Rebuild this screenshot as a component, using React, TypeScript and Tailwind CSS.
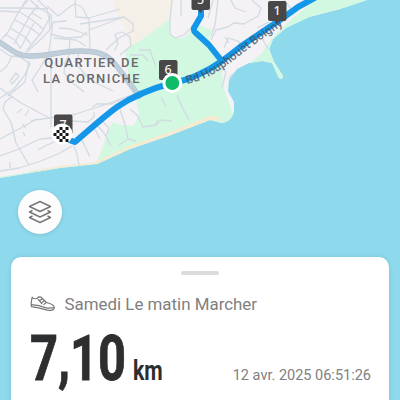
type Marker = { label: string; x: number; y: number };

const MARKERS: Marker[] = [
  { label: "5", x: 200.5, y: 0 },
  { label: "1", x: 277, y: 11 },
  { label: "6", x: 168, y: 70 },
  { label: "7", x: 63, y: 124.5 },
];

const STREETS = [
  "M0 8H20L48 9",
  "M0 11L18 12L28 0",
  "M26 0L17 15L8 32L2 39",
  "M30 0L39 8L51 15L42 32L27 50",
  "M20 12L35 22L43 29",
  "M15 20L32 29L40 35",
  "M10 28L25 37L31 44",
  "M6 35L15 40L20 48",
  "M29 17L14 44",
  "M34 23L20 49",
  "M38 5L28 18M32 13L42 19",
  "M38 0L47 9L49 18L50 30L38 42L23 55",
  "M47 6L58 16L71 6L75 4L82 7L89 20L90 50",
  "M75 0L76 17L89 18L120 9",
  "M51 15L52 30L49 52L40 68L32 80L38 92",
  "M50 29L54 22L67 21",
  "M50 34L66 38L81 37L87 32",
  "M59 28L71 29L88 35",
  "M54 38L76 40L86 46",
  "M70 38L69 52",
  "M80 24L100 21L124 17L133 24V31L119 38L106 50",
  "M89 30L121 18",
  "M114 51L118 44L115 34L122 32L130 37L131 46L120 55",
  "M51 54V127",
  "M0 49L10 56L20 57L30 64L24 76L13 90L0 98",
  "M12 56L7 66L0 72",
  "M10 81L16 73L19 76L12 84Z",
  "M29 61L25 82L8 96",
  "M70 53L65 63L64 73L74 84L84 92",
  "M79 51L77 65L90 80",
  "M0 88L12 97L23 104L51 119",
  "M13 96L5 102L3 109L11 122L16 143L29 165",
  "M0 139L17 130L35 120L50 118L76 114L110 103L142 91",
  "M0 156L19 149L40 139L53 138",
  "M0 171L19 168L41 161L60 153L72 146",
  "M17 113L22 109M25 116L29 110M31 121L37 119M22 124L26 128",
  "M38 150L45 146L52 143L61 139",
  "M72 121L88 122L94 117V112",
  "M92 107L97 104L112 104L124 98",
  "M73 144L77 154L79 165M82 140L90 157",
  "M90 126L96 131L100 139M95 123L104 133L111 146",
  "M100 119L109 128L106 136",
  "M119 106L125 125L128 139L119 145M128 139L136 141",
  "M10 162V168M23 132L25 136",
  "M88 76L96 83L113 91",
  "M130 109L137 115L143 127L156 125L161 120L172 121",
  "M158 120L154 126M161 97L166 106",
  "M177 95L182 107L189 120",
  "M139 50L150 50L156 67M130 55L143 55L148 61",
  "M172 0L170 20L170 34L175 38L184 35L193 26L199 16",
  "M181 0V16",
  "M213 0L208 18M218 0L215 25L211 36",
  "M211 40L216 30L228 27L234 23L244 24L258 16L261 8L252 0",
  "M231 0L235 8L246 12",
  "M224 48L228 38L238 41L243 47M225 37L229 43",
  "M257 28L269 22M262 38L268 49",
  "M221 68L226 72L222 88M229 78L234 73",
  "M284 0L292 10",
];

const CHECKS = [
  [60, 127], [66, 127], [57, 130], [63, 130], [60, 133], [66, 133],
  [54, 133], [57, 136], [63, 136], [60, 139], [66, 139],
];

const COAST =
  "M0 0H367L340 9L309 17L286 28L273 39L269 49L274 62L283 76Q283 80 279 78L272 63L262 61L249 63L237 69L229 80L228 91L234 102V112Q231 122 222 123L210 120L168 136L130 149L97 164L60 168L30 173L0 178Z";

function MapView() {
  return (
    <svg className="absolute inset-0 h-[400px] w-[400px]" viewBox="0 0 400 400" fill="none">
      <defs>
        <clipPath id="land">
          <path d={COAST} />
        </clipPath>
      </defs>
      <g clipPath="url(#land)">
        <rect width="400" height="200" fill="#f4f2f5" />
        {/* Beach quarter and parks */}
        <path d="M114 0H174L169 20L130 48L124 27L114 8Z" fill="#f5f0e7" />
        <path
          d="M170 19L169 34Q177 42 187 36L196 24L212 30L208 41L222 57L222 70L223 86L239 130L97 175V162L112 122L120 125L134 126L139 115L137 104L129 81L125 50L141 40Z"
          fill="#d3f8e1"
        />
        <path d="M222 57L278 24V47L250 62L235 70L223 84Z" fill="#f4f2f5" />
        <path
          d="M246 66L262 53L272 38L286 24L303 10L314 0H370L309 22L287 31L275 40L271 49L286 80L278 80L270 62Z"
          fill="#d3f8e1"
        />
        <path d="M97 163L130 148L170 134L210 118L220 119" stroke="#f4ebd0" strokeWidth="4" />
        <path d="M30 172L60 167L97 163" stroke="#f4ebd0" strokeWidth="2" />
        <path d="M0 178L30 173L83 166" stroke="#c9f4e2" strokeWidth="2" />

        <g stroke="#d2dae2" strokeWidth="1.3" strokeLinejoin="round">
          {STREETS.map((d) => (
            <path key={d} d={d} />
          ))}
        </g>
        <path
          d="M-2 41C10 49 17 56 30 56C48 56 63 51 80 51C95 51 103 53 110 59C121 69 129 84 141 98"
          stroke="#b4c4d2"
          strokeWidth="5.5"
        />
        <path
          d="M-2 41C10 49 17 56 30 56C48 56 63 51 80 51C95 51 103 53 110 59C121 69 129 84 141 98"
          stroke="#c0ceda"
          strokeWidth="4"
        />
      </g>

      {/* Recorded track */}
      <g stroke="#1496e9" strokeWidth="6" strokeLinejoin="round" strokeLinecap="round">
        <path d="M320 -5L298 7L280 20L262 32L240 47L222 61C205 73 190 80 172 83C150 89 133 96 117 107C102 118 88 131 75 142L66 139" />
        <path d="M201 8V16L194 28Q193 31 197 34L209 45L221 60" />
      </g>

      <defs>
        <path id="boulevard" d="M187 84C206 80 222 70 239 56L262 39L294 18" />
      </defs>
      <text
        className="font-['Roboto',sans-serif] text-[11.5px] font-medium tracking-[0.1px]"
        fill="#41505f"
        fillOpacity="0.8"
      >
        <textPath href="#boulevard">Bd Houphouët Boigny</textPath>
      </text>

      {MARKERS.map(({ label, x, y }) => (
        <g key={label}>
          <path d={`M${x - 4} ${y + 8}h8l-4 5Z`} fill="#484848" />
          <rect x={x - 9} y={y - 10} width="18.5" height="20" rx="2" fill="#484848" />
          <text
            x={x}
            y={y + 4}
            textAnchor="middle"
            fill="#f5f5f5"
            className="font-['Noto_Sans',sans-serif] text-[12.5px] font-medium"
          >
            {label}
          </text>
        </g>
      ))}

      <circle cx="172.3" cy="83" r="10" fill="#fff" />
      <circle cx="172.3" cy="83" r="6.9" fill="#0dbb69" />

      <circle cx="62" cy="134" r="10.5" fill="#fff" />
      <g fill="#181818">
        {CHECKS.map(([x, y]) => (
          <rect key={`${x}-${y}`} x={x - 0.5} y={y} width="3" height="3" />
        ))}
      </g>
    </svg>
  );
}

function LayersIcon() {
  return (
    <svg className="h-6 w-6" viewBox="0 0 24 24" fill="none" stroke="#777" strokeWidth="1.4" strokeLinejoin="round">
      <path d="M12 1.5L22.5 6.5L12 11.5L1.5 6.5Z" />
      <path d="M4.5 10.5L1.5 12L12 17L22.5 12L19.5 10.5" />
      <path d="M4.5 16L1.5 17.5L12 22.5L22.5 17.5L19.5 16" />
    </svg>
  );
}

function ShoeIcon() {
  return (
    <svg
      className="h-4 w-[26px]"
      viewBox="0 0 26 16"
      fill="none"
      stroke="#777"
      strokeWidth="1.2"
      strokeLinecap="round"
      strokeLinejoin="round"
    >
      <path d="M2.2 1.2C3.6 3.4 7 3.2 8.6 .8L11 1.2L16.2 6.2C18.6 7.6 24.2 8 24.2 11.4C24.2 14.6 20.5 14.6 17.2 14.2L8.6 11.8L1.4 10.6C.4 7 1.6 4.4 2.2 1.2Z" />
      <path d="M1.3 8.6L9 9.6L17 12.1L24 11.9M9.8 4.4L12.4 3M11.8 6.4L14.4 4.8M13.8 8.4L16.2 6.6M8.2 3.4L11.8 7.6" />
    </svg>
  );
}

export default function App() {
  return (
    <main className="relative flex h-[400px] w-[400px] flex-col overflow-hidden bg-[#8fd9ed] font-['Roboto',sans-serif]">
      <MapView />

      <div className="relative flex h-[190px] shrink-0 items-start pt-[55px] pl-[42px]">
        <p className="flex w-[100px] flex-col items-center text-[13px] leading-4 font-medium tracking-[1.4px] whitespace-nowrap text-[#69696c]">
          <span>QUARTIER DE</span>
          <span>LA CORNICHE</span>
        </p>
      </div>

      <div className="relative h-[67px] shrink-0 pl-[18px]">
        <button
          type="button"
          aria-label="Layers"
          className="flex h-11 w-11 items-center justify-center rounded-full bg-[#fdfdfd] shadow-[0_1px_4px_rgba(0,0,0,0.12)]"
        >
          <LayersIcon />
        </button>
      </div>

      <section className="relative mx-[11px] flex h-[160px] shrink-0 flex-col rounded-t-[10px] bg-white shadow-[0_0_5px_rgba(0,0,0,0.12)]">
        <div className="mx-auto mt-[14px] h-1 w-[38px] shrink-0 rounded-full bg-[#dcdcdc]" />
        <div className="mt-[17px] flex h-6 items-center gap-[9px] pl-[18.5px]">
          <ShoeIcon />
          <h1 className="text-[16.9px] leading-6 whitespace-nowrap text-[#808080]">Samedi Le matin Marcher</h1>
        </div>
        <div className="mt-[7px] flex items-baseline justify-between pr-[18px] pl-[19px]">
          <div className="flex items-baseline text-[#2d2e2f]">
            <span className="w-[102.5px] origin-left scale-x-[0.775] text-[63px] leading-[72px] font-bold whitespace-nowrap [-webkit-text-stroke:0.8px_#2d2e2f]">
              7,10
            </span>
            <span className="w-8 origin-left scale-x-[0.76] text-[28px] font-bold">km</span>
          </div>
          <time className="text-[14.5px] whitespace-nowrap text-[#808080]">12 avr. 2025 06:51:26</time>
        </div>
      </section>
    </main>
  );
}
